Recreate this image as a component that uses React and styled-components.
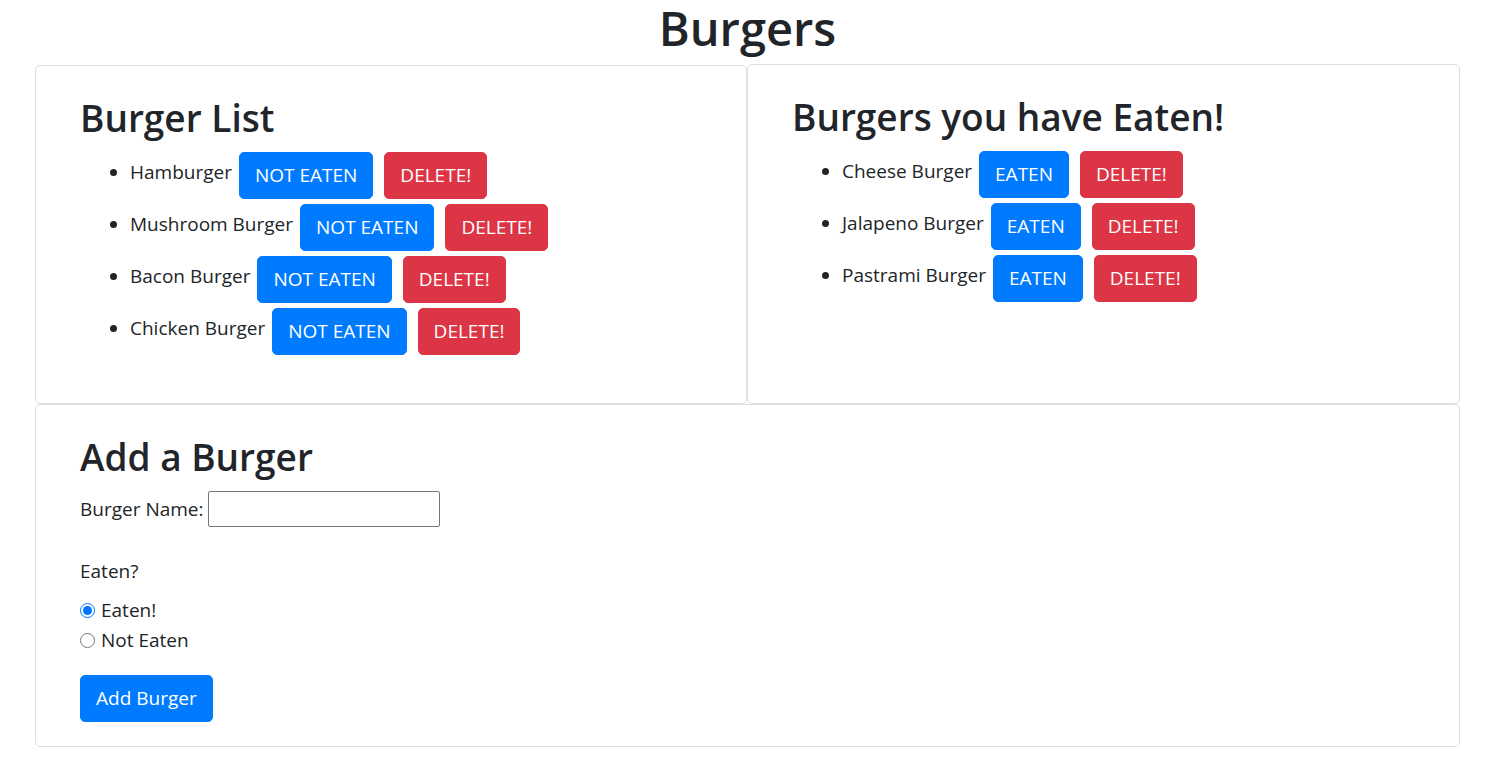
import React from 'react';
import styled, { createGlobalStyle } from 'styled-components';

const GlobalStyle = createGlobalStyle`
  body {
    margin: 0;
    background: #fff;
    color: #212529;
    font-family: "Open Sans", "Noto Sans", sans-serif;
    font-size: 19px;
    line-height: 30px;
  }
`;

const Page = styled.div`
  padding: 0 36px 0 35px;
`;

const Title = styled.h1`
  margin: 0 0 9px;
  font-size: 47px;
  font-weight: 600;
  line-height: 56px;
  text-align: center;
`;

const Row = styled.div`
  display: grid;
  grid-template-columns: 712px 1fr;
`;

const Card = styled.section`
  border: 1px solid rgba(0, 0, 0, 0.125);
  border-radius: 5px;
  padding: 28px 44px ${(p) => p.$bottom || 28}px;
  & + & {
    margin-top: -1px;
  }
`;

const Heading = styled.h2`
  margin: 0 0 10px;
  font-size: 37px;
  font-weight: 600;
  line-height: 48px;
`;

const List = styled.ul`
  margin: 0 0 20px;
  padding-left: 50px;
`;

const Item = styled.li`
  & + & {
    margin-top: 5px;
  }
`;

const ItemRow = styled.div`
  display: flex;
  align-items: flex-start;
`;

const ItemName = styled.span`
  padding-top: 5px;
  margin-right: 7px;
`;

const Button = styled.button`
  display: inline-block;
  padding: 8px 15px;
  border: 1px solid ${(p) => (p.$variant === 'danger' ? '#dc3545' : '#007bff')};
  border-radius: 5px;
  background: ${(p) => (p.$variant === 'danger' ? '#dc3545' : '#007bff')};
  color: #fff;
  font-family: inherit;
  font-size: 19px;
  line-height: 29px;
  cursor: pointer;
  & + & {
    margin-left: 11px;
  }
`;

const NameRow = styled.div`
  display: flex;
  align-items: center;
  gap: 4px;
  margin-bottom: 29px;
`;

const TextInput = styled.input`
  box-sizing: border-box;
  width: 232px;
  height: 36px;
  border: 1px solid #767676;
  border-radius: 2px;
  padding: 2px 4px;
  font-family: inherit;
  font-size: 17px;
`;

const Question = styled.div`
  margin-bottom: 9px;
`;

const RadioLine = styled.label`
  display: flex;
  align-items: center;
`;

const Radio = styled.input`
  width: 15px;
  height: 15px;
  margin: 0 6px 0 0;
  accent-color: #0075ff;
`;

const Submit = styled(Button)`
  margin-top: 20px;
`;

const burgers = ['Hamburger', 'Mushroom Burger', 'Bacon Burger', 'Chicken Burger'];
const eaten = ['Cheese Burger', 'Jalapeno Burger', 'Pastrami Burger'];

function BurgerItems({ items, label }) {
  return (
    <List>
      {items.map((name) => (
        <Item key={name}>
          <ItemRow>
            <ItemName>{name}</ItemName>
            <Button>{label}</Button>
            <Button $variant="danger">DELETE!</Button>
          </ItemRow>
        </Item>
      ))}
    </List>
  );
}

export default function App() {
  return (
    <>
      <GlobalStyle />
      <Page>
        <Title>Burgers</Title>
        <Row>
          <Card>
            <Heading>Burger List</Heading>
            <BurgerItems items={burgers} label="NOT EATEN" />
          </Card>
          <Card>
            <Heading>Burgers you have Eaten!</Heading>
            <BurgerItems items={eaten} label="EATEN" />
          </Card>
        </Row>
        <Card $bottom={24}>
          <Heading>Add a Burger</Heading>
          <NameRow>
            <span>Burger Name:</span>
            <TextInput type="text" />
          </NameRow>
          <Question>Eaten?</Question>
          <RadioLine>
            <Radio type="radio" name="eaten" defaultChecked />
            Eaten!
          </RadioLine>
          <RadioLine>
            <Radio type="radio" name="eaten" />
            Not Eaten
          </RadioLine>
          <Submit>Add Burger</Submit>
        </Card>
      </Page>
    </>
  );
}
